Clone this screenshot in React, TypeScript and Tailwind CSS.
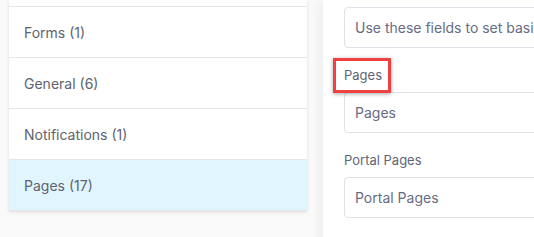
import React from "react"

const categories = [
  { name: "Forms", count: 1 },
  { name: "General", count: 6 },
  { name: "Notifications", count: 1 },
  { name: "Pages", count: 17 },
]

function Field({ label, value, marked }: { label?: string; value: string; marked?: boolean }) {
  return (
    <div className="mb-[18px]">
      {label && (
        <div className="relative mb-2">
          <span className="block text-[13px] leading-[18px] text-[#5f6673]">{label}</span>
          {marked && (
            <div className="absolute -left-[11px] -top-[8px] h-[35px] w-[58px] border-[3px] border-[#ef4141] shadow-[0_1px_4px_rgba(0,0,0,0.35)]" />
          )}
        </div>
      )}
      <div className="flex h-[41px] items-center rounded-[4px] border border-[#dde1e8] bg-white px-[10px] text-[14px] text-[#676c82] whitespace-nowrap">
        {value}
      </div>
    </div>
  )
}

export default function App() {
  const selected = "Pages"

  return (
    <div
      className="h-[237px] w-[534px] overflow-hidden bg-[#f9f9f9]"
      style={{ fontFamily: "Inter, 'Noto Sans', sans-serif" }}
    >
      <div className="flex">
        <div className="ml-[9px] w-[298px] shrink-0 self-start bg-white shadow-[0_1px_3px_rgba(0,0,0,0.12)]">
          {/* tail of the row scrolled above */}
          <div className="h-[7px] border-b border-[#e6e6e6]" />
          {categories.map((c) => (
            <div
              key={c.name}
              className={`flex h-[51px] items-center border-b border-[#e6e6e6] pl-[15px] text-[14px] text-[#5d646e] ${
                c.name === selected ? "bg-[#e1f5fe]" : "bg-white"
              }`}
            >
              {c.name} ({c.count})
            </div>
          ))}
        </div>

        <div className="ml-[16px] h-[300px] w-[600px] shrink-0 bg-white px-[21px] pt-[7px] shadow-[-3px_0_10px_rgba(0,0,0,0.05)]">
          <Field value="Use these fields to set basic page settings" />
          <Field label="Pages" value="Pages" marked />
          <Field label="Portal Pages" value="Portal Pages" />
        </div>
      </div>
    </div>
  )
}
